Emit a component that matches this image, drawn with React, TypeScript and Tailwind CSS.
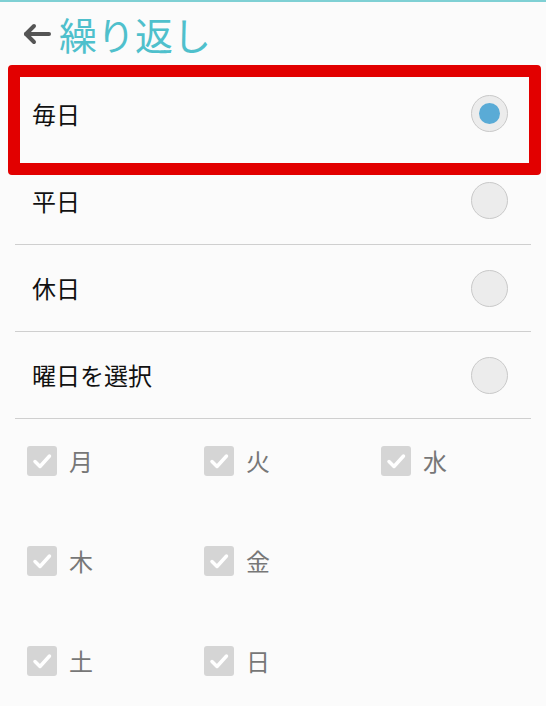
import React from "react";

const font = { fontFamily: '"Noto Sans CJK JP", "Noto Sans", sans-serif' };

const options = [
  { label: "毎日", selected: true },
  { label: "平日", selected: false },
  { label: "休日", selected: false },
  { label: "曜日を選択", selected: false },
];

const dayRows = [
  ["月", "火", "水"],
  ["木", "金"],
  ["土", "日"],
];

const Radio = ({ selected }: { selected: boolean }) => (
  <div className="flex h-[37px] w-[37px] items-center justify-center rounded-full border-[1.5px] border-[#c9c9c9] bg-[#ececec]">
    {selected && <div className="h-[21px] w-[21px] rounded-full bg-[#5aabd6]" />}
  </div>
);

const CheckBox = () => (
  <div className="flex h-[30px] w-[30px] items-center justify-center rounded-[3px] bg-[#d5d5d5]">
    <svg width="30" height="30" viewBox="0 0 30 30">
      <polyline
        points="8,15.5 13,20.5 22.5,10"
        fill="none"
        stroke="#ffffff"
        strokeWidth="3.5"
        strokeLinecap="round"
        strokeLinejoin="round"
      />
    </svg>
  </div>
);

export default function App() {
  return (
    <div className="relative min-h-[706px] w-[546px] overflow-hidden border-t-2 border-[#7fd0d4] bg-[#fbfbfb]" style={font}>

      <header className="flex h-[68px] items-center gap-[8px] pb-[4px] pl-[22px]">
        <svg width="29" height="22" viewBox="0 0 29 22">
          <line x1="4" y1="11" x2="27" y2="11" stroke="#555555" strokeWidth="4" strokeLinecap="round" />
          <polyline points="12,3 4,11 12,19" fill="none" stroke="#555555" strokeWidth="4" strokeLinecap="round" strokeLinejoin="round" />
        </svg>
        <h1 className="text-[38px] leading-none text-[#4fc0cc]">繰り返し</h1>
      </header>

      <ul className="mx-[15px]">
        {options.map((o, i) => (
          <li
            key={o.label}
            className={
              i < 2
                ? "flex h-[87px] items-center justify-between pl-[17px] pr-[23px]"
                : "flex h-[87px] items-center justify-between border-t-[1.5px] border-[#cfcfcf] pl-[17px] pr-[23px]"
            }
          >
            <span className="text-[24px] leading-none text-[#111111]">{o.label}</span>
            <Radio selected={o.selected} />
          </li>
        ))}
      </ul>

      <div className="mx-[15px] flex flex-col gap-[70px] border-t-[1.5px] border-[#cfcfcf] pl-[12px] pt-[27px]">
        {dayRows.map((row, r) => (
          <div key={r} className="grid grid-cols-[177px_177px_177px]">
            {row.map((d) => (
              <div key={d} className="flex items-center gap-[12px]">
                <CheckBox />
                <span className="text-[24px] leading-none text-[#777777]">{d}</span>
              </div>
            ))}
          </div>
        ))}
      </div>

      <div className="pointer-events-none absolute left-[8px] top-[63px] h-[110px] w-[533px] rounded-[4px] border-[12px] border-[#e20000]" />
    </div>
  );
}
